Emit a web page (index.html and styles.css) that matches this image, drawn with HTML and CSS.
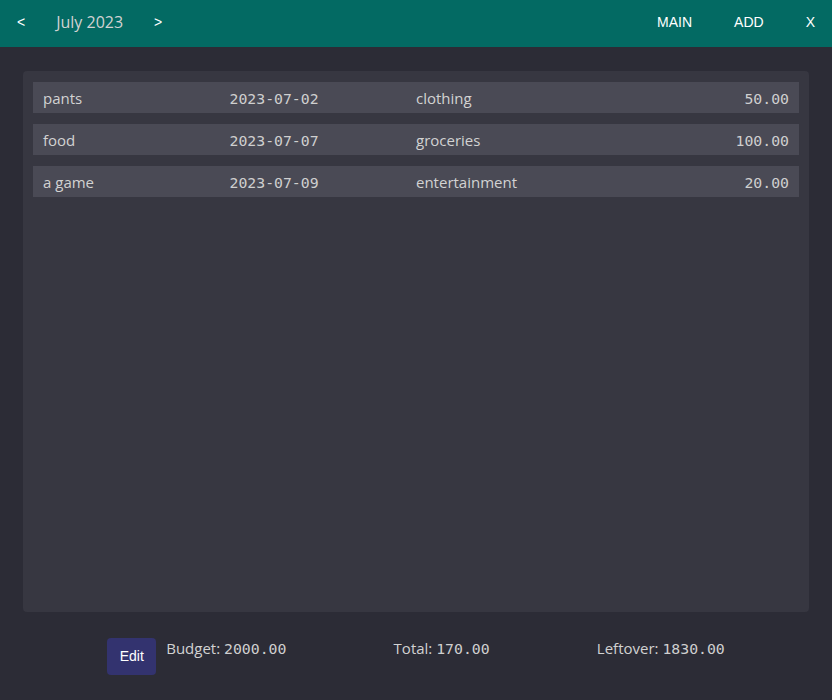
FILE: index.html
```html
<!DOCTYPE html>
<html>
<head>
<meta charset="utf-8">
<link rel="stylesheet" href="styles.css">
</head>
<body>
<header class="topbar">
  <div class="month-nav">
    <span class="nav-btn prev">&lt;</span>
    <span class="month">July 2023</span>
    <span class="nav-btn next">&gt;</span>
  </div>
  <nav class="menu">
    <span class="menu-item">MAIN</span>
    <span class="menu-item">ADD</span>
    <span class="menu-item close">X</span>
  </nav>
</header>
<main class="content">
  <section class="panel">
    <div class="row"><span>pants</span><span class="num">2023-07-02</span><span>clothing</span><span class="num amount">50.00</span></div>
    <div class="row"><span>food</span><span class="num">2023-07-07</span><span>groceries</span><span class="num amount">100.00</span></div>
    <div class="row"><span>a game</span><span class="num">2023-07-09</span><span>entertainment</span><span class="num amount">20.00</span></div>
  </section>
</main>
<footer class="summary">
  <div class="budget-group">
    <button class="edit-btn">Edit</button>
    <span class="stat">Budget: <span class="num">2000.00</span></span>
  </div>
  <span class="stat">Total: <span class="num">170.00</span></span>
  <span class="stat">Leftover: <span class="num">1830.00</span></span>
</footer>
</body>
</html>
```
FILE: styles.css
```css
html, body {
  margin: 0;
  padding: 0;
}
body {
  width: 832px;
  height: 700px;
  background: #2c2c36;
  color: #d2d2d2;
  font-family: "Open Sans", "Noto Sans", sans-serif;
  font-size: 15px;
  display: flex;
  flex-direction: column;
  overflow: hidden;
}
.num {
  font-family: "DejaVu Sans Mono", "Liberation Mono", monospace;
  font-size: 14.8px;
  color: #cfcfcf;
}
.topbar {
  height: 47px;
  box-sizing: border-box;
  padding-bottom: 3px;
  background: #036a63;
  display: flex;
  align-items: center;
  justify-content: space-between;
  flex-shrink: 0;
}
.month-nav {
  display: flex;
  align-items: center;
  padding-left: 17px;
}
.nav-btn {
  font-family: "Liberation Sans", Arial, sans-serif;
  font-size: 14px;
  color: #ffffff;
}
.month {
  color: #d2d2d2;
  font-size: 16px;
  margin: 0 31px 0 31px;
}
.menu {
  display: flex;
  align-items: center;
  gap: 42px;
  padding-right: 17px;
}
.menu-item {
  font-family: "Liberation Sans", Arial, sans-serif;
  font-size: 14px;
  color: #ffffff;
}
.content {
  padding: 24px 23px 0 23px;
  flex-shrink: 0;
}
.panel {
  height: 541px;
  box-sizing: border-box;
  background: #373741;
  border-radius: 4px;
  padding: 11px 10px;
  display: flex;
  flex-direction: column;
  gap: 11px;
}
.row {
  height: 31px;
  box-sizing: border-box;
  background: #4a4a55;
  display: grid;
  grid-template-columns: repeat(4, 1fr);
  align-items: baseline;
  align-content: start;
  padding: 6px 10px 0 10px;
  line-height: 21px;
}
.amount {
  text-align: right;
}
.summary {
  flex: 1;
  display: flex;
  align-items: center;
  justify-content: space-evenly;
}
.budget-group {
  display: flex;
  align-items: flex-start;
  gap: 10px;
}
.stat {
  height: 37px;
  line-height: 20px;
}
.edit-btn {
  width: 49px;
  height: 37px;
  border: none;
  border-radius: 4px;
  background: #33336f;
  color: #ffffff;
  font-family: "Liberation Sans", Arial, sans-serif;
  font-size: 14px;
  padding: 0;
}
```
